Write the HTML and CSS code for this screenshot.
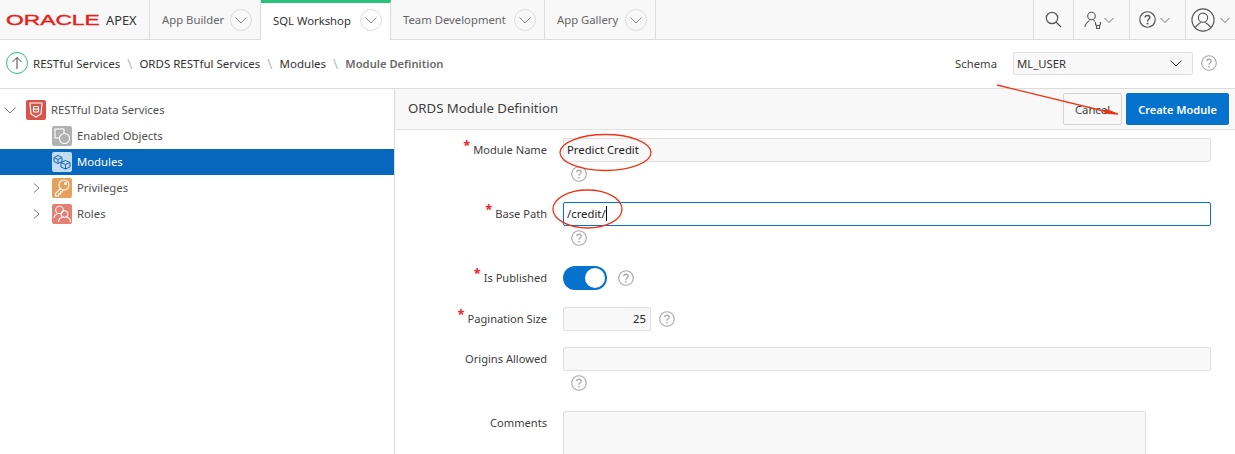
FILE: index.html
```html
<!DOCTYPE html>
<html lang="en">
<head>
<meta charset="utf-8">
<title>ORDS Module Definition</title>
<link rel="stylesheet" href="styles.css">
</head>
<body>
<svg width="0" height="0" class="defs">
  <symbol id="chev" viewBox="0 0 12 12"><path d="M.5 3.500 6 9 11.500 3.500" fill="none" stroke="currentColor" stroke-width="1"/></symbol>
  <symbol id="help" viewBox="0 0 16 16"><circle cx="8" cy="8" r="7.300" fill="none" stroke="currentColor" stroke-width="1.100"/><path d="M5.800 6.200C5.800 3.600 10.200 3.600 10.200 6.200 10.200 7.900 8 7.800 8 9.800" fill="none" stroke="currentColor" stroke-width="1.300"/><circle cx="8" cy="11.800" r=".9" fill="currentColor"/></symbol>
</svg>
<header class="topbar">
  <div class="brand"><span class="oracle">ORACLE</span><span class="apex">APEX</span></div>
  <nav class="tabs">
    <div class="tab tab-app"><span>App Builder</span><i class="tab-chev"><svg width="12" height="12"><use href="#chev"/></svg></i></div>
    <div class="tab tab-sql active"><span>SQL Workshop</span><i class="tab-chev"><svg width="12" height="12"><use href="#chev"/></svg></i></div>
    <div class="tab tab-team"><span>Team Development</span><i class="tab-chev"><svg width="12" height="12"><use href="#chev"/></svg></i></div>
    <div class="tab tab-gallery"><span>App Gallery</span><i class="tab-chev"><svg width="12" height="12"><use href="#chev"/></svg></i></div>
  </nav>
  <div class="tools">
    <div class="tool tool-search"><svg width="17" height="17" viewBox="0 0 17 17" fill="none" stroke="#555" stroke-width="1.200"><circle cx="7" cy="7" r="5.700"/><path d="M11 11 16 16"/></svg></div>
    <div class="tool tool-user"><svg width="20" height="18" viewBox="0 0 20 18" fill="none" stroke="#555" stroke-width="1.100"><circle cx="7.500" cy="5" r="3.800"/><path d="M1 16C1.500 12 4 10.500 5.500 9.500M9.500 9.500 11 10.200"/><path d="M11.500 11V13.200C11.500 15 16.500 15 16.500 13.200V11M12.500 14.500V17.500H15.500V14.500"/></svg><svg class="tool-chev" width="10" height="10"><use href="#chev"/></svg></div>
    <div class="tool tool-help"><svg width="17" height="17" viewBox="0 0 16 16"><use href="#help"/></svg><svg class="tool-chev" width="10" height="10"><use href="#chev"/></svg></div>
    <div class="tool tool-avatar"><svg width="24" height="24" viewBox="0 0 26 26" fill="none" stroke="#555" stroke-width="1.200"><circle cx="13" cy="13" r="12"/><circle cx="13" cy="10.500" r="5"/><path d="M4.500 21.500C6 18 9 17.500 10.500 15.500M21.500 21.500C20 18 17 17.500 15.500 15.500"/></svg><svg class="tool-chev" width="10" height="10"><use href="#chev"/></svg></div>
  </div>
</header>

<div class="crumbbar">
  <span class="up"><svg width="14" height="14" viewBox="0 0 14 14" fill="none" stroke="#444" stroke-width="1"><path d="M7 13V1.500M2.500 6 7 1.500 11.500 6"/></svg></span>
  <ol class="crumbs">
    <li>RESTful Services</li>
    <li class="sep">\</li>
    <li>ORDS RESTful Services</li>
    <li class="sep">\</li>
    <li>Modules</li>
    <li class="sep">\</li>
    <li class="current">Module Definition</li>
  </ol>
  <div class="schema">
    <span class="schema-label">Schema</span>
    <div class="schema-select"><span>ML_USER</span><svg width="12" height="12"><use href="#chev"/></svg></div>
    <svg class="help" width="16" height="16"><use href="#help"/></svg>
  </div>
</div>

<main class="body">
  <aside class="tree">
    <div class="node node-root">
      <svg class="twist" width="12" height="12"><use href="#chev"/></svg>
      <span class="ico ico-red"><svg width="14" height="16" viewBox="0 0 14 16" fill="none" stroke="#fff" stroke-width="1.200"><path d="M1 1H13L12 12 7 15 2 12Z"/><rect x="4.500" y="4.500" width="5" height="5.500" rx="1"/><path d="M4.500 7.200H9.500"/></svg></span>
      <span>RESTful Data Services</span>
    </div>
    <div class="node">
      <span class="twist-blank"></span>
      <span class="ico ico-grey"><svg width="18" height="18" viewBox="0 0 18 18" fill="none" stroke="#fff" stroke-width="1.100"><rect x="2" y="2" width="9" height="9"/><circle cx="11.500" cy="11.500" r="5" fill="#b1b1b1"/></svg></span>
      <span>Enabled Objects</span>
    </div>
    <div class="node selected">
      <span class="twist-blank"></span>
      <span class="ico ico-blue"><svg width="18" height="16" viewBox="0 0 18 16" fill="none" stroke="#1165b5" stroke-width="1"><path d="M1 3.500 5 1.500 9 3.500V7.500L5 9.500 1 7.500ZM1 3.500 5 5.500 9 3.500M5 5.500V9.500"/><path d="M8 8.500 12.500 6.500 17 8.500V13L12.500 15 8 13ZM8 8.500 12.500 10.500 17 8.500M12.500 10.500V15"/></svg></span>
      <span>Modules</span>
    </div>
    <div class="node">
      <svg class="twist" width="12" height="12"><path d="M4 1.500 9 6 4 10.500" fill="none" stroke="#777"/></svg>
      <span class="ico ico-orange"><svg width="16" height="18" viewBox="0 0 16 18" fill="none" stroke="#fff" stroke-width="1.100"><circle cx="10" cy="6" r="5"/><circle cx="11.500" cy="4.500" r="1"/><path d="M6.500 9.500 1.500 14.500V17H4.500V15H6.500V13H8L9 11"/></svg></span>
      <span>Privileges</span>
    </div>
    <div class="node">
      <svg class="twist" width="12" height="12"><path d="M4 1.500 9 6 4 10.500" fill="none" stroke="#777"/></svg>
      <span class="ico ico-salmon"><svg width="18" height="18" viewBox="0 0 18 18" fill="none" stroke="#fff" stroke-width="1.100"><circle cx="6.500" cy="5" r="3.800"/><circle cx="11.500" cy="9" r="3.300"/><path d="M1 13C1 10.500 2.500 9.500 4 9M5.500 17C5.500 14 8 12.500 9.500 12M17.500 17C17.500 14 15 12.500 13.500 12"/></svg></span>
      <span>Roles</span>
    </div>
  </aside>

  <section class="panel">
    <div class="panel-head">
      <h1>ORDS Module Definition</h1>
      <div class="actions">
        <button class="btn">Cancel</button>
        <button class="btn btn-hot">Create Module</button>
      </div>
    </div>
    <form class="form">
      <div class="row row-name">
        <label class="req">Module Name</label>
        <div class="field">
          <div class="input">Predict Credit</div>
          <svg class="help help-below" width="16" height="16"><use href="#help"/></svg>
        </div>
      </div>
      <div class="row row-path">
        <label class="req">Base Path</label>
        <div class="field">
          <div class="input focus">/credit/<span class="caret"></span></div>
          <svg class="help help-below" width="16" height="16"><use href="#help"/></svg>
        </div>
      </div>
      <div class="row row-pub">
        <label class="req">Is Published</label>
        <div class="field inline">
          <span class="toggle"><span class="knob"></span></span>
          <svg class="help" width="16" height="16"><use href="#help"/></svg>
        </div>
      </div>
      <div class="row row-page">
        <label class="req">Pagination Size</label>
        <div class="field inline">
          <div class="input num">25</div>
          <svg class="help" width="16" height="16"><use href="#help"/></svg>
        </div>
      </div>
      <div class="row row-orig">
        <label>Origins Allowed</label>
        <div class="field">
          <div class="input"></div>
          <svg class="help help-below" width="16" height="16"><use href="#help"/></svg>
        </div>
      </div>
      <div class="row row-comm">
        <label>Comments</label>
        <div class="field">
          <div class="input area"></div>
        </div>
      </div>
    </form>
  </section>
</main>

<svg class="annot" width="1235" height="454" viewBox="0 0 1235 454" fill="none" stroke="#ee3317" stroke-width="1.300">
  <ellipse cx="605.500" cy="152.500" rx="45.500" ry="18"/>
  <ellipse cx="587.500" cy="209" rx="34.500" ry="19"/>
  <path d="M997 85 1112 113"/>
  <path d="M1106 109.500 1118 114 1105 113Z" fill="#ee3317"/>
</svg>
</body>
</html>
```
FILE: styles.css
```css
* { box-sizing: border-box; }
html, body { margin: 0; padding: 0; }
body {
  width: 1235px;
  height: 454px;
  overflow: hidden;
  position: relative;
  background: #fff;
  font-family: "Noto Sans", "Open Sans", sans-serif;
  font-size: 11.300px;
  color: #404040;
}
.defs { position: absolute; }

.topbar {
  display: flex;
  height: 40px;
  background: #f8f8f8;
  border-bottom: 1px solid #dcdcdc;
}
.brand {
  width: 150px;
  display: flex;
  align-items: center;
  border-right: 1px solid #dcdcdc;
  height: 39px;
  padding-left: 6px;
}
.oracle {
  display: inline-block;
  width: 94px;
  font-family: "Liberation Sans", sans-serif;
  font-size: 15px;
  font-weight: 400;
  line-height: 15px;
  color: #e8201a;
  -webkit-text-stroke: 0.4px #e8201a;
  transform: scaleX(1.520);
  transform-origin: left center;
}
.apex {
  font-size: 12.800px;
  color: #333;
  margin-left: 6px;
}
.tabs { display: flex; }
.tab {
  display: flex;
  align-items: center;
  justify-content: space-between;
  height: 39px;
  padding: 0 8px 0 12px;
  border-right: 1px solid #dcdcdc;
  color: #666;
}
.tab-app { width: 111px; }
.tab-sql { width: 130px; }
.tab-team { width: 154px; }
.tab-gallery { width: 111px; }
.tab.active {
  background: #fff;
  height: 40px;
  color: #333;
  border-top: 3px solid #2ac37e;
  padding-bottom: 3px;
  margin-bottom: -1px;
}
.tab-chev {
  width: 22px;
  height: 22px;
  border: 1px solid #ddd;
  border-radius: 50%;
  display: flex;
  align-items: center;
  justify-content: center;
  color: #888;
}
.tools { margin-left: auto; display: flex; }
.tool {
  display: flex;
  align-items: center;
  justify-content: flex-start;
  height: 39px;
  border-left: 1px solid #dcdcdc;
  color: #555;
}
.tool-search { width: 40px; padding-left: 11px; }
.tool-user { width: 56px; padding-left: 10px; gap: 0; }
.tool-help { width: 56px; padding-left: 9px; gap: 4px; }
.tool-avatar { width: 50px; padding-left: 5px; gap: 5px; }

.crumbbar {
  display: flex;
  align-items: center;
  height: 49px;
  border-bottom: 1px solid #dcdcdc;
  padding: 0 18px 2px 6px;
}
.up {
  width: 22px;
  height: 22px;
  border: 1px solid #2ac37e;
  border-radius: 50%;
  display: flex;
  align-items: center;
  justify-content: center;
  margin-right: 5px;
}
.crumbs {
  display: flex;
  gap: 7px;
  list-style: none;
  margin: 0;
  padding: 0;
  color: #333;
  font-size: 11.500px;
}
.crumbs .sep { color: #bbb; font-size: 14px; line-height: 15px; }
.crumbs .current { color: #6a6a6a; font-weight: 600; font-size: 11.200px; }
.schema { margin-left: auto; display: flex; align-items: center; }
.schema-label { margin-right: 16px; }
.schema-select {
  width: 180px;
  height: 23px;
  display: flex;
  align-items: center;
  justify-content: space-between;
  padding: 0 10px 0 3px;
  background: #f8f8f8;
  border: 1px solid #dfdfdf;
  border-radius: 2px;
  color: #333;
  margin-right: 8px;
}
.schema-select svg { color: #333; }
.help { color: #a8a8a8; flex: none; display: block; }

.body { display: flex; height: 365px; }
.tree {
  width: 395px;
  border-right: 1px solid #dcdcdc;
  padding-top: 8px;
}
.node {
  display: flex;
  align-items: center;
  height: 26px;
  padding-left: 4px;
  color: #505050;
}
.node > span:last-child { margin-top: -2px; }
.node .twist { color: #777; flex: none; width: 12px; margin-left: 26px; margin-right: 10px; }
.node-root .twist { margin-left: 0; margin-right: 10px; }
.node .twist-blank { width: 48px; flex: none; }
.ico {
  width: 20px;
  height: 20px;
  border-radius: 2px;
  margin-right: 5px;
  display: flex;
  align-items: center;
  justify-content: center;
  flex: none;
}
.ico-red { background: #d9534a; }
.ico-grey { background: #b1b1b1; }
.ico-blue { background: #c2dcf3; }
.ico-orange { background: #e5a05c; }
.ico-salmon { background: #e47f71; }
.selected { background: #0767bc; color: #fff; }

.panel { flex: 1; min-width: 0; }
.panel-head {
  display: flex;
  align-items: center;
  justify-content: space-between;
  height: 41px;
  padding: 0 6px 0 13px;
  background: #f8f8f8;
  border-bottom: 1px solid #e2e2e2;
}
h1 { margin: -3px 0 0; font-size: 13.200px; font-weight: 400; color: #404040; }
.actions { display: flex; gap: 4px; }
.btn {
  height: 32px;
  width: 59px;
  border: 1px solid #d4d4d4;
  border-radius: 2px;
  background: #f8f8f8;
  font: inherit;
  color: #404040;
  padding: 0;
}
.btn-hot {
  width: 103px;
  background: #0572ce;
  border-color: #0572ce;
  color: #fff;
  font-weight: 600;
  font-size: 11px;
}

.form { display: block; }
.row {
  display: grid;
  grid-template-columns: 152px 1fr;
  column-gap: 16px;
  padding-right: 24px;
}
.row label {
  text-align: right;
  line-height: 24px;
  position: relative;
  font-size: 11.100px;
}
.req::before {
  content: "*";
  color: #f5222d;
  font-size: 13px;
  font-weight: 700;
  line-height: 13px;
  margin-right: 3px;
  position: relative;
  top: -4px;
}
.input {
  height: 24px;
  background: #f8f8f8;
  border: 1px solid #e0e0e0;
  border-radius: 2px;
  padding: 0 3px;
  line-height: 22px;
  color: #222;
}
.focus { background: #fff; border-color: #0572ce; }
.caret {
  display: inline-block;
  width: 1px;
  height: 15px;
  background: #000;
  vertical-align: -3px;
}
.help-below { margin: 4px 0 0 8px; }
.inline { display: flex; align-items: center; }
.row-name { margin-top: 8px; }
.row-path { margin-top: 20px; }
.row-pub { margin-top: 20px; }
.row-page { margin-top: 17px; }
.row-orig { margin-top: 16px; }
.row-comm { margin-top: 20px; }
.toggle {
  display: block;
  width: 44px;
  height: 24px;
  border-radius: 12px;
  background: #0572ce;
  padding: 2px;
  margin-right: 11px;
}
.knob {
  display: block;
  width: 20px;
  height: 20px;
  margin-left: 20px;
  border-radius: 50%;
  background: #fff;
}
.num { width: 88px; text-align: right; margin-right: 8px; padding-right: 4px; }
.area { width: 583px; height: 60px; }

.annot { position: absolute; left: 0; top: 0; pointer-events: none; }
```
